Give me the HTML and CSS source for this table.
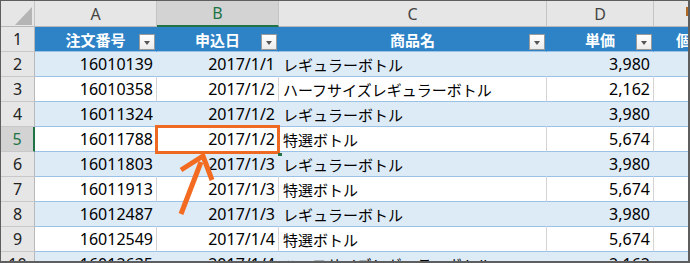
FILE: index.html
```html
<!DOCTYPE html>
<html lang="ja">
<head>
<meta charset="utf-8">
<link rel="stylesheet" href="styles.css">
</head>
<body>
<div class="frame">
  <div class="sheet">
    <div class="ch corner"><svg width="33" height="25" viewBox="0 0 33 25"><polygon points="14,24 31,24 31,6" fill="#b5b5b5"/></svg></div>
    <div class="ch">A</div>
    <div class="ch sel-col">B</div>
    <div class="ch">C</div>
    <div class="ch">D</div>
    <div class="ch last"><span class="mark"></span></div>

    <div class="rh">1</div>
    <div class="th">注文番号<span class="fb"></span></div>
    <div class="th">申込日<span class="fb"></span></div>
    <div class="th">商品名<span class="fb"></span></div>
    <div class="th">単価<span class="fb"></span></div>
    <div class="th th-e">個数</div>

    <div class="rh">2</div>
    <div class="td b r">16010139</div><div class="td b r">2017/1/1</div><div class="td b">レギュラーボトル</div><div class="td b r">3,980</div><div class="td b last"></div>
    <div class="rh">3</div>
    <div class="td r">16010358</div><div class="td r">2017/1/2</div><div class="td">ハーフサイズレギュラーボトル</div><div class="td r">2,162</div><div class="td last"></div>
    <div class="rh">4</div>
    <div class="td b r">16011324</div><div class="td b r">2017/1/2</div><div class="td b">レギュラーボトル</div><div class="td b r">3,980</div><div class="td b last"></div>
    <div class="rh sel-row">5</div>
    <div class="td r">16011788</div><div class="td r">2017/1/2</div><div class="td">特選ボトル</div><div class="td r">5,674</div><div class="td last"></div>
    <div class="rh">6</div>
    <div class="td b r">16011803</div><div class="td b r">2017/1/3</div><div class="td b">レギュラーボトル</div><div class="td b r">3,980</div><div class="td b last"></div>
    <div class="rh">7</div>
    <div class="td r">16011913</div><div class="td r">2017/1/3</div><div class="td">特選ボトル</div><div class="td r">5,674</div><div class="td last"></div>
    <div class="rh">8</div>
    <div class="td b r">16012487</div><div class="td b r">2017/1/3</div><div class="td b">レギュラーボトル</div><div class="td b r">3,980</div><div class="td b last"></div>
    <div class="rh">9</div>
    <div class="td r">16012549</div><div class="td r">2017/1/4</div><div class="td">特選ボトル</div><div class="td r">5,674</div><div class="td last"></div>
    <div class="rh">10</div>
    <div class="td b r">16012635</div><div class="td b r">2017/1/4</div><div class="td b">ハーフサイズレギュラーボトル</div><div class="td b r">2,162</div><div class="td b last"></div>
  </div>
  <div class="selbox"><span class="handle"></span></div>
  <svg class="arrow" width="690" height="263" viewBox="0 0 690 263">
    <line x1="181" y1="214" x2="201" y2="162" stroke="#f26b21" stroke-width="5"/>
    <polyline points="181,170 203,156 212,180" fill="none" stroke="#f26b21" stroke-width="5" stroke-linejoin="miter"/>
  </svg>
</div>
</body>
</html>
```
FILE: styles.css
```css
html, body {
  margin: 0;
  padding: 0;
  background: #fff;
}
.frame {
  position: relative;
  width: 690px;
  height: 263px;
  box-sizing: border-box;
  border-style: solid;
  border-color: #5e5e5e;
  border-width: 1px 2px 2px 1px;
  overflow: hidden;
  font-family: "Noto Sans", "Noto Sans CJK JP", sans-serif;
  font-size: 15px;
  color: #000;
}
.sheet {
  display: grid;
  grid-template-columns: 34px 122px 122px 268px 107px 1fr;
  grid-template-rows: 26px;
  grid-auto-rows: 25px;
}
.sheet > div {
  box-sizing: border-box;
  border-right: 1px solid #d4d4d4;
  border-bottom: 1px solid #9bc2e6;
  display: flex;
  align-items: center;
  white-space: nowrap;
  overflow: hidden;
}
.ch {
  background: #e6e6e6;
  justify-content: center;
  color: #444;
  font-family: "Noto Sans", sans-serif;
  font-size: 16px;
  border-right-color: #c4c4c4 !important;
  border-bottom-color: #b8b8b8 !important;
  position: relative;
}
.corner { align-items: stretch; }
.corner svg { display: block; }
.sel-col {
  background: #d3d3d3;
  color: #217346;
  border-bottom: 2px solid #217346 !important;
}
.ch.last { border-right: none; }
.mark {
  position: absolute;
  right: 0;
  top: 6px;
  width: 2px;
  height: 9px;
  background: #b06a26;
}
.rh {
  background: #e6e6e6;
  justify-content: center;
  color: #222;
  font-family: "Noto Sans", sans-serif;
  font-size: 16px;
  border-right-color: #b8b8b8 !important;
  border-bottom-color: #c8c8c8 !important;
}
.sel-row {
  background: #d3d3d3;
  color: #217346;
  border-right: 2px solid #217346 !important;
}
.th {
  background: #2e83c7;
  color: #fff;
  font-weight: bold;
  font-family: "Noto Sans CJK JP", sans-serif;
  justify-content: center;
  position: relative;
  border-right-color: #2e83c7 !important;
  border-bottom-color: #9bc2e6 !important;
}
.th-e {
  justify-content: flex-start;
  padding-left: 22px;
  border-right: none !important;
}
.fb {
  position: absolute;
  right: 1px;
  top: 7px;
  width: 16px;
  height: 16px;
  box-sizing: border-box;
  border: 1px solid #9a9a9a;
  background: linear-gradient(#ffffff, #ececec);
}
.fb::after {
  content: "";
  position: absolute;
  left: 4px;
  top: 6px;
  border-left: 3.5px solid transparent;
  border-right: 3.5px solid transparent;
  border-top: 4px solid #555;
}
.td {
  background: #fff;
  padding: 0 4px 0 4px;
}
.td.r {
  justify-content: flex-end;
  padding-right: 3px;
  font-size: 16px;
}
.td.b {
  background: #ddebf7;
  border-right-color: #ddebf7 !important;
}
.td.last { border-right: none; }
.selbox {
  position: absolute;
  left: 154px;
  top: 124px;
  width: 125px;
  height: 29px;
  box-sizing: border-box;
  border: 3px solid #ee6a22;
}
.handle {
  position: absolute;
  right: -5px;
  bottom: -5px;
  width: 4px;
  height: 3px;
  background: #217346;
}
.arrow {
  position: absolute;
  left: -1px;
  top: -1px;
  pointer-events: none;
}
```
